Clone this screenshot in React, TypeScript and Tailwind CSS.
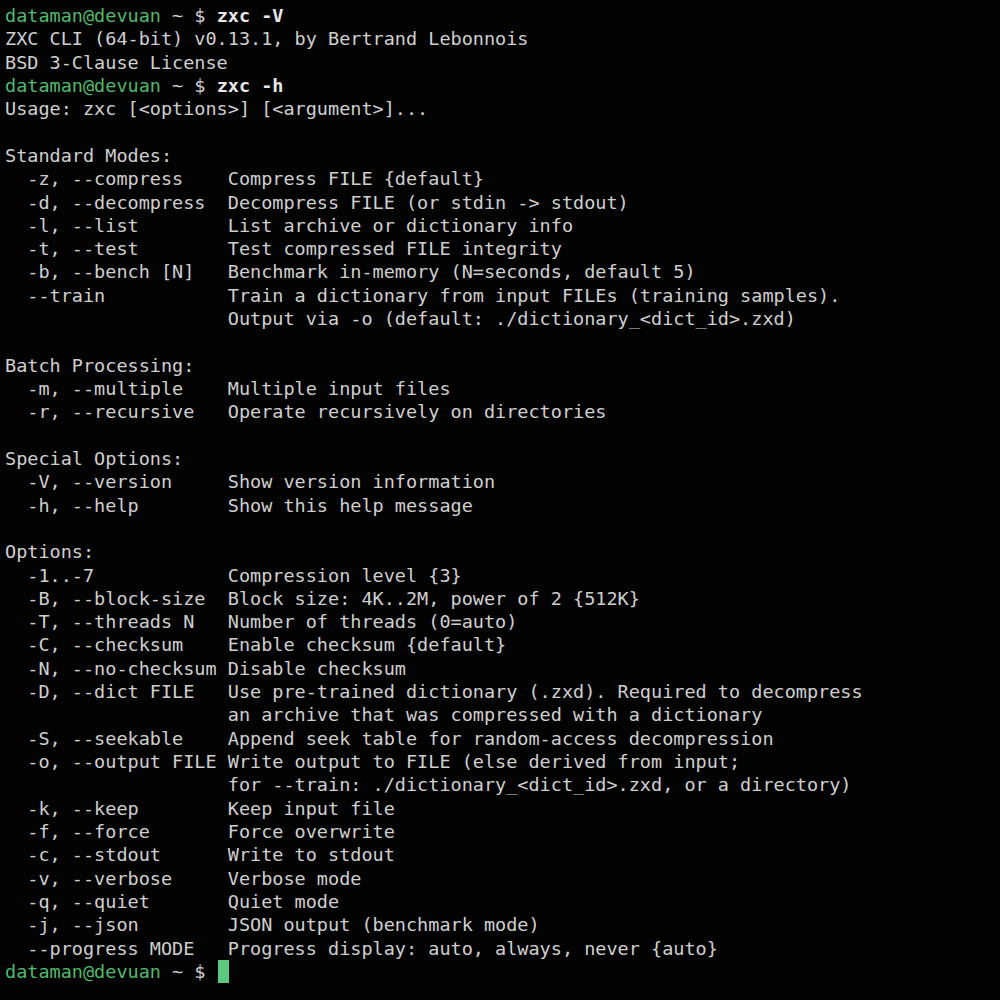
import React from "react";

const lines: string[] = [
  "ZXC CLI (64-bit) v0.13.1, by Bertrand Lebonnois",
  "BSD 3-Clause License",
];

const help: string[] = [
  "Usage: zxc [<options>] [<argument>]...",
  "",
  "Standard Modes:",
  "  -z, --compress    Compress FILE {default}",
  "  -d, --decompress  Decompress FILE (or stdin -> stdout)",
  "  -l, --list        List archive or dictionary info",
  "  -t, --test        Test compressed FILE integrity",
  "  -b, --bench [N]   Benchmark in-memory (N=seconds, default 5)",
  "  --train           Train a dictionary from input FILEs (training samples).",
  "                    Output via -o (default: ./dictionary_<dict_id>.zxd)",
  "",
  "Batch Processing:",
  "  -m, --multiple    Multiple input files",
  "  -r, --recursive   Operate recursively on directories",
  "",
  "Special Options:",
  "  -V, --version     Show version information",
  "  -h, --help        Show this help message",
  "",
  "Options:",
  "  -1..-7            Compression level {3}",
  "  -B, --block-size  Block size: 4K..2M, power of 2 {512K}",
  "  -T, --threads N   Number of threads (0=auto)",
  "  -C, --checksum    Enable checksum {default}",
  "  -N, --no-checksum Disable checksum",
  "  -D, --dict FILE   Use pre-trained dictionary (.zxd). Required to decompress",
  "                    an archive that was compressed with a dictionary",
  "  -S, --seekable    Append seek table for random-access decompression",
  "  -o, --output FILE Write output to FILE (else derived from input;",
  "                    for --train: ./dictionary_<dict_id>.zxd, or a directory)",
  "  -k, --keep        Keep input file",
  "  -f, --force       Force overwrite",
  "  -c, --stdout      Write to stdout",
  "  -v, --verbose     Verbose mode",
  "  -q, --quiet       Quiet mode",
  "  -j, --json        JSON output (benchmark mode)",
  "  --progress MODE   Progress display: auto, always, never {auto}",
];

function Prompt({ cmd, cursor }: { cmd?: string; cursor?: boolean }) {
  return (
    <div className="flex h-[23.32px] items-start">
      <span className="text-[#4fba6b]">dataman@devuan</span>
      <span className="text-[#cfcfcf]"> ~ $ </span>
      {cmd && <span className="font-bold text-[#e8e8e8]">{cmd}</span>}
      {cursor && <span className="inline-block w-[11px] h-[23px] bg-[#5cc87e] ml-[1px]" />}
    </div>
  );
}

export default function App() {
  return (
    <div
      className="w-[1000px] h-[1000px] bg-[#030303] overflow-hidden pt-[4px] pl-[5px] text-[18.5px] leading-[23.32px] text-[#cfcfcf] whitespace-pre"
      style={{ fontFamily: '"DejaVu Sans Mono", monospace' }}
    >
      <Prompt cmd="zxc -V" />
      {lines.map((l, i) => (
        <div key={"a" + i} className="h-[23.32px]">{l}</div>
      ))}
      <Prompt cmd="zxc -h" />
      {help.map((l, i) => (
        <div key={"b" + i} className="h-[23.32px]">{l}</div>
      ))}
      <Prompt cursor />
    </div>
  );
}
